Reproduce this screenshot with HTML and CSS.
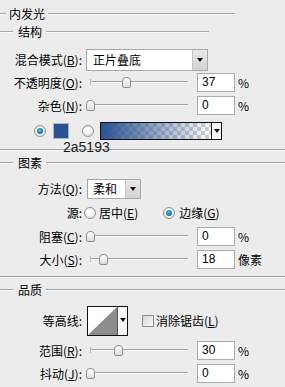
FILE: index.html
```html
<!DOCTYPE html>
<html lang="zh">
<head>
<meta charset="utf-8">
<title>内发光</title>
<link rel="stylesheet" href="styles.css">
</head>
<body>
<div class="panel">
  <div class="legend lg-top"><span class="ln ln-a"></span><span class="lt">内发光</span><span class="ln ln-b"></span></div>
  <div class="legend lg-sub"><span class="ln ln-c"></span><span class="lt">结构</span><span class="ln ln-d"></span></div>

  <div class="row r-blend">
    <span class="lbl">混合模式(<u>B</u>):</span>
    <div class="select sel-wide"><span class="val">正片叠底</span><span class="btn"><i class="tri"></i></span></div>
  </div>

  <div class="row r-field r-opacity">
    <span class="lbl">不透明度(<u>O</u>):</span>
    <div class="slider"><span class="track"></span><span class="thumb" style="left:36px"></span></div>
    <span class="num">37</span><span class="unit">%</span>
  </div>

  <div class="row r-field r-noise">
    <span class="lbl">杂色(<u>N</u>):</span>
    <div class="slider"><span class="track"></span><span class="thumb" style="left:0px"></span></div>
    <span class="num">0</span><span class="unit">%</span>
  </div>

  <div class="row r-color">
    <span class="radio on rc1"></span>
    <span class="swatch"><span class="hex">2a5193</span></span>
    <span class="radio rc2"></span>
    <div class="grad"><span class="fill"></span><span class="gbtn"><i class="tri"></i></span></div>
  </div>

  <div class="divider d1"></div>
  <div class="legend lg-sec"><span class="ln ln-c"></span><span class="lt">图素</span><span class="ln ln-full"></span></div>

  <div class="row r-method">
    <span class="lbl">方法(<u>Q</u>):</span>
    <div class="select sel-small"><span class="val">柔和</span><span class="btn"><i class="tri"></i></span></div>
  </div>

  <div class="row r-source">
    <span class="lbl">源:</span>
    <span class="radio rs1"></span><span class="opt o1">居中(<u>E</u>)</span>
    <span class="radio on rs2"></span><span class="opt o2">边缘(<u>G</u>)</span>
  </div>

  <div class="row r-field r-choke">
    <span class="lbl">阻塞(<u>C</u>):</span>
    <div class="slider"><span class="track"></span><span class="thumb" style="left:0px"></span></div>
    <span class="num">0</span><span class="unit">%</span>
  </div>

  <div class="row r-field r-size">
    <span class="lbl">大小(<u>S</u>):</span>
    <div class="slider"><span class="track"></span><span class="thumb" style="left:13px"></span></div>
    <span class="num">18</span><span class="unit">像素</span>
  </div>

  <div class="divider d2"></div>
  <div class="legend lg-sec"><span class="ln ln-c"></span><span class="lt">品质</span><span class="ln ln-full"></span></div>

  <div class="row r-contour">
    <span class="lbl">等高线:</span>
    <div class="contour">
      <span class="curve">
        <svg width="29" height="28" viewBox="0 0 29 28"><rect x="0" y="0" width="29" height="28" fill="#ffffff"/><polygon points="0,28 29,0 29,28" fill="#8c8c8c"/></svg>
      </span>
      <span class="cbtn"><i class="tri"></i></span>
    </div>
    <span class="check"></span><span class="opt o3">消除锯齿(<u>L</u>)</span>
  </div>

  <div class="row r-field r-range">
    <span class="lbl">范围(<u>R</u>):</span>
    <div class="slider"><span class="track"></span><span class="thumb" style="left:28px"></span></div>
    <span class="num">30</span><span class="unit">%</span>
  </div>

  <div class="row r-field r-jitter">
    <span class="lbl">抖动(<u>J</u>):</span>
    <div class="slider"><span class="track"></span><span class="thumb" style="left:0px"></span></div>
    <span class="num">0</span><span class="unit">%</span>
  </div>
</div>
</body>
</html>
```

FILE: styles.css
```css
* { box-sizing: border-box; }
html, body { margin: 0; padding: 0; }
body {
  width: 285px;
  height: 387px;
  overflow: hidden;
  background: #ececec;
  color: #000;
  font-family: "Noto Sans CJK SC", "Liberation Sans", sans-serif;
  font-size: 12px;
}
u { text-decoration: underline; text-underline-offset: 1px; }

.panel { padding-top: 6px; }

/* group headers */
.legend { display: flex; align-items: center; height: 16px; line-height: 16px; }
.ln { display: block; height: 2px; border-top: 1px solid #a4a4a4; border-bottom: 1px solid #fbfbfb; flex: none; }
.ln-a { width: 6px; }
.ln-b { width: 187px; margin-left: 3px; }
.lg-top .lt { margin-left: 3px; }
.ln-c { width: 13px; }
.lg-sub .lt, .lg-sec .lt { margin-left: 5px; }
.ln-d { width: 163px; margin-left: 4px; }
.ln-full { flex: 1; margin-left: 4px; }
.lg-sub { margin-top: 2px; }

.divider { height: 2px; border-top: 1px solid #a4a4a4; border-bottom: 1px solid #fbfbfb; }
.d1 { margin-top: 9px; }
.d2 { margin-top: 7px; }
.lg-sec { margin-top: 4px; }

/* rows */
.row { display: flex; align-items: center; }
.lbl { flex: none; width: 82px; text-align: right; white-space: nowrap; line-height: 16px; }

.r-field { height: 19px; }
.r-blend { height: 22px; margin-top: 9px; }
.r-opacity { margin-top: 2px; }
.r-noise { margin-top: 4px; }
.r-color { height: 18px; margin-top: 7px; }
.r-method { height: 20px; margin-top: 8px; }
.r-source { height: 16px; margin-top: 6px; }
.r-choke { margin-top: 6px; }
.r-size { margin-top: 4px; }
.r-contour { height: 30px; margin-top: 8px; }
.r-range { margin-top: 5px; }
.r-jitter { margin-top: 4px; }

/* dropdowns */
.select { display: flex; height: 100%; border: 1px solid #a7a7a7; background: #fff; margin-left: 4px; }
.sel-wide { width: 122px; }
.sel-small { width: 54px; margin-left: 5px; }
.select .val { flex: 1; padding-left: 6px; line-height: 20px; white-space: nowrap; }
.sel-small .val { padding-left: 5px; line-height: 18px; }
.select .btn {
  flex: none; width: 15px; border-left: 1px solid #c4c4c4;
  background: linear-gradient(#e9e9e9, #d2d2d2);
  display: flex; align-items: center; justify-content: center;
}
.tri { display: block; width: 0; height: 0; border-left: 3.5px solid transparent; border-right: 3.5px solid transparent; border-top: 4px solid #111; }

/* sliders */
.slider { position: relative; flex: none; width: 102px; height: 19px; margin-left: 4px; }
.track {
  position: absolute; left: 4px; right: 0; top: 8px; height: 2px;
  border-top: 1px solid #a2a2a2; border-bottom: 1px solid #fdfdfd;
}
.track::before { content: ""; position: absolute; left: 0; top: -3px; width: 1px; height: 6px; background: #b8b8b8; }
.thumb {
  position: absolute; top: 4px; width: 9px; height: 11px;
  border: 1px solid #8f8f8f; border-radius: 4px 4px 2px 2px;
  background: linear-gradient(#ffffff, #dcdcdc);
}

.num {
  flex: none; width: 38px; height: 19px; margin-left: 9px;
  background: #fff; border: 1px solid #ababab;
  padding-left: 4px; line-height: 17px;
  font-family: "Liberation Sans", sans-serif; font-size: 12px;
}
.unit { margin-left: 3px; line-height: 16px; }

/* colour row */
.radio {
  flex: none; position: relative; width: 12px; height: 12px; border-radius: 50%;
  border: 1px solid #8d9090;
  background: radial-gradient(circle at 45% 40%, #ffffff 20%, #d9d9d9 100%);
}
.radio.on::after {
  content: ""; position: absolute; left: 2px; top: 2px; width: 6px; height: 6px; border-radius: 50%;
  background: radial-gradient(circle at 45% 40%, #5fc0ee 0%, #2178b4 55%, #123d63 100%);
}
.rc1 { margin-left: 34px; }
.swatch { position: relative; flex: none; width: 16px; height: 16px; margin-left: 7px; background: #2a5193; border: 1px solid #a9b4c8; }
.hex {
  position: absolute; left: 9px; top: 16px;
  font-family: "Liberation Sans", sans-serif; font-size: 14px; line-height: 14px; color: #1c1c1c;
  white-space: nowrap;
}
.rc2 { margin-left: 13px; }
.grad { display: flex; flex: none; width: 122px; height: 18px; margin-left: 6px; border: 1px solid #111; }
.grad .fill {
  flex: 1;
  background-color: #fff;
  background-image:
    linear-gradient(to right, #2a5193, rgba(42, 81, 147, 0)),
    linear-gradient(45deg, #cfcfcf 25%, transparent 25%, transparent 75%, #cfcfcf 75%),
    linear-gradient(45deg, #cfcfcf 25%, transparent 25%, transparent 75%, #cfcfcf 75%);
  background-size: 100% 100%, 8px 8px, 8px 8px;
  background-position: 0 0, 0 0, 4px 4px;
}
.gbtn { flex: none; width: 10px; border-left: 1px solid #111; background: #f5f5f5; display: flex; align-items: center; justify-content: center; }

/* source row */
.rs1 { margin-left: 2px; }
.opt { white-space: nowrap; line-height: 16px; }
.o1 { margin-left: 3px; }
.rs2 { margin-left: 25px; }
.o2 { margin-left: 4px; }

/* contour row */
.contour { display: flex; flex: none; width: 41px; height: 30px; margin-left: 5px; border: 1px solid #111; background: #fff; }
.curve { display: block; width: 29px; height: 28px; }
.curve svg { display: block; }
.cbtn { flex: none; width: 10px; border-left: 1px solid #555; background: #f7f7f7; display: flex; justify-content: center; padding-top: 11px; }
.check {
  flex: none; width: 12px; height: 12px; margin-left: 14px;
  border: 1px solid #8d9090; background: linear-gradient(135deg, #d6d6d6, #fbfbfb);
}
.o3 { margin-left: 2px; }
```
